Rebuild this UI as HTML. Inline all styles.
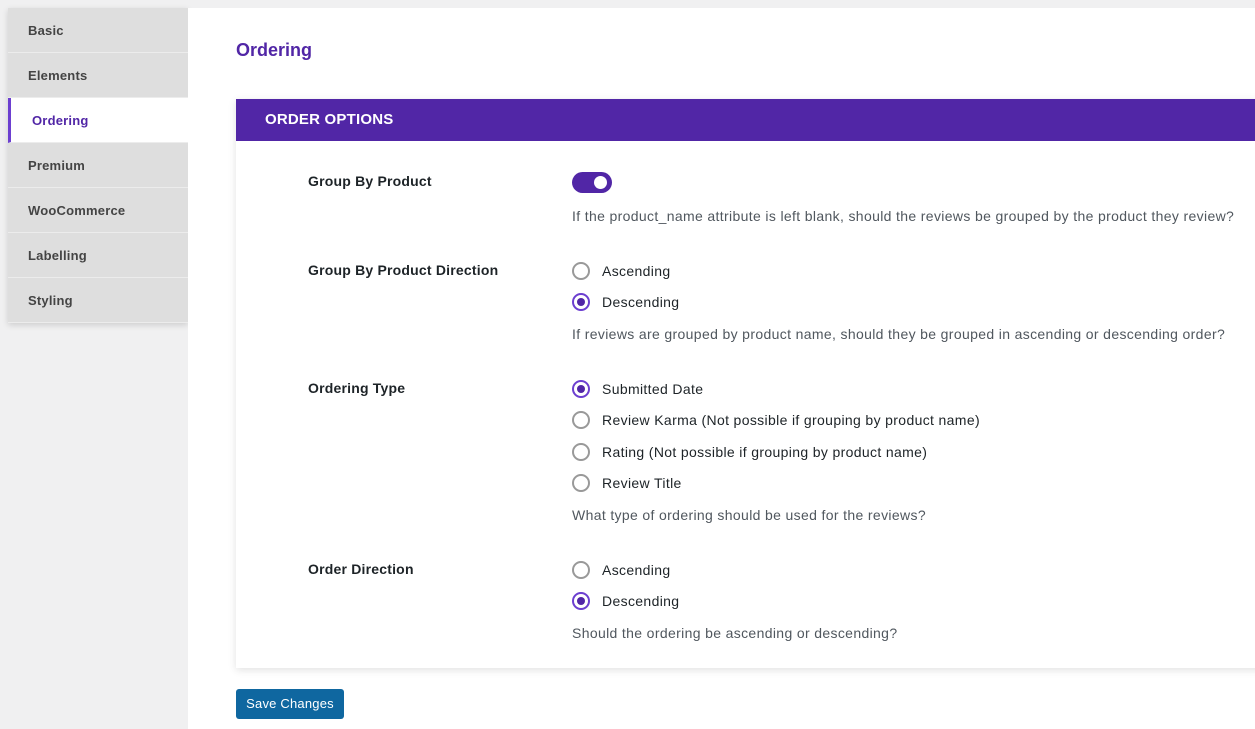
<!DOCTYPE html>
<html><head><meta charset="utf-8"><style>
*{box-sizing:border-box;margin:0;padding:0}
body{width:1255px;height:729px;background:#f0f0f1;font-family:"Liberation Sans",Arial,sans-serif;position:relative;overflow:hidden;color:#1d2327}
.side{position:absolute;left:8px;top:8px;width:180px;box-shadow:0 2px 6px rgba(0,0,0,.15)}
.tab{height:45px;background:#dedede;border-bottom:1px solid #ececec;font-size:13px;font-weight:bold;color:#444;padding-left:20px;line-height:45px;letter-spacing:.2px}
.tab.act{background:#fff;color:#5126a6;border-left:3px solid #6c3fd0;padding-left:21px}
.main{position:absolute;left:188px;top:8px;width:1067px;height:721px;background:#fff}
h1{position:absolute;left:48px;top:32px;font-size:18px;color:#5126a6;font-weight:bold}
.panel{position:absolute;left:48px;top:91px;width:1030px;height:569px;background:#fff;box-shadow:0 2px 8px rgba(0,0,0,.12)}
.hdr{height:42px;background:#5126a6;color:#fff;font-weight:bold;font-size:15px;line-height:42px;padding-left:29px;letter-spacing:.2px}
.lbl{position:absolute;left:72px;font-size:14px;font-weight:bold;color:#1d2327;letter-spacing:.2px;margin-top:1px}
.t{position:absolute;left:336px;font-size:14px;color:#1d2327;line-height:18px;letter-spacing:.35px;margin-top:1px}
.d{color:#50575e}
.r{position:absolute;left:336px;width:18px;height:18px;border:2px solid #999;border-radius:50%;margin-top:1px}
.r.on{border-color:#6c3fd0}
.r.on:after{content:"";position:absolute;left:3px;top:3px;width:8px;height:8px;border-radius:50%;background:#5126a6}
.o{left:366px}
.tog{position:absolute;left:336px;top:73px;width:40px;height:21px;border-radius:11px;background:#5126a6}
.tog:after{content:"";position:absolute;right:5px;top:4px;width:13px;height:13px;border-radius:50%;background:#fff}
.btn{position:absolute;left:48px;top:681px;width:108px;height:30px;background:#0f67a0;color:#fff;font-size:13px;border-radius:3px;text-align:center;line-height:30px;letter-spacing:.2px}
</style></head><body>
<div class="side">
<div class="tab">Basic</div><div class="tab">Elements</div><div class="tab act">Ordering</div><div class="tab">Premium</div><div class="tab">WooCommerce</div><div class="tab">Labelling</div><div class="tab">Styling</div>
</div>
<div class="main">
<h1>Ordering</h1>
<div class="panel">
<div class="hdr">ORDER OPTIONS</div>
<div class="lbl" style="top:73px">Group By Product</div>
<div class="tog"></div>
<div class="t d" style="top:107px">If the product_name attribute is left blank, should the reviews be grouped by the product they review?</div>
<div class="lbl" style="top:162px">Group By Product Direction</div>
<div class="r" style="top:162px"></div><div class="t o" style="top:162px">Ascending</div>
<div class="r on" style="top:193px"></div><div class="t o" style="top:193px">Descending</div>
<div class="t d" style="top:225px">If reviews are grouped by product name, should they be grouped in ascending or descending order?</div>
<div class="lbl" style="top:280px">Ordering Type</div>
<div class="r on" style="top:280px"></div><div class="t o" style="top:280px">Submitted Date</div>
<div class="r" style="top:311px"></div><div class="t o" style="top:311px">Review Karma (Not possible if grouping by product name)</div>
<div class="r" style="top:343px"></div><div class="t o" style="top:343px">Rating (Not possible if grouping by product name)</div>
<div class="r" style="top:374px"></div><div class="t o" style="top:374px">Review Title</div>
<div class="t d" style="top:406px">What type of ordering should be used for the reviews?</div>
<div class="lbl" style="top:461px">Order Direction</div>
<div class="r" style="top:461px"></div><div class="t o" style="top:461px">Ascending</div>
<div class="r on" style="top:492px"></div><div class="t o" style="top:492px">Descending</div>
<div class="t d" style="top:524px">Should the ordering be ascending or descending?</div>
</div>
<div class="btn">Save Changes</div>
</div>
</body></html>
